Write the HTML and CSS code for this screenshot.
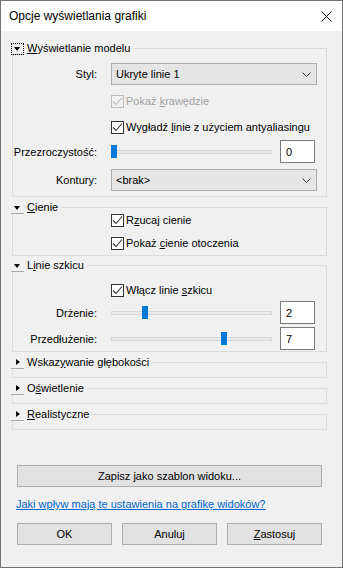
FILE: index.html
```html
<!DOCTYPE html>
<html lang="pl">
<head>
  <meta charset="UTF-8">
  <meta name="viewport" content="width=device-width, initial-scale=1.0">
  <title>Opcje wyświetlania grafiki</title>
  <link rel="stylesheet" href="styles.css">
</head>
<body>

  <div class="window">
    <div class="titlebar">
      <span class="title">Opcje wyświetlania grafiki</span>
      <svg class="close" width="11" height="11" viewBox="0 0 11 11">
        <path d="M0.5 0.5 L10.5 10.5 M10.5 0.5 L0.5 10.5" stroke="#000" stroke-width="1" fill="none"/>
      </svg>
    </div>

    <div class="content">
      <!-- Wyświetlanie modelu -->
      <fieldset class="group group-model">
        <legend><span class="toggle open focused"></span><u>W</u>yświetlanie modelu</legend>
        <div class="rows">
          <div class="row row-combo">
            <label class="lbl">Styl:</label>
            <div class="combo"><span>Ukryte linie 1</span><i class="chev"></i></div>
          </div>
          <div class="row row-check r-pokaz">
            <span class="lbl"></span>
            <span class="check disabled"></span>
            <span class="ctext muted">Pokaż <u>k</u>rawędzie</span>
          </div>
          <div class="row row-check r-wygladz">
            <span class="lbl"></span>
            <span class="check"></span>
            <span class="ctext">Wygładź <u>l</u>inie z użyciem antyaliasingu</span>
          </div>
          <div class="row row-slider r-przez">
            <label class="lbl">Przezroczystość:</label>
            <div class="slider"><div class="track"></div><span class="thumb" style="left: 0px"></span></div>
            <div class="numbox">0</div>
          </div>
          <div class="row row-combo r-kontury">
            <label class="lbl">Kontury:</label>
            <div class="combo"><span>&lt;brak&gt;</span><i class="chev"></i></div>
          </div>
        </div>
      </fieldset>

      <!-- Cienie -->
      <fieldset class="group group-shadow">
        <legend><span class="toggle open"></span><u>C</u>ienie</legend>
        <div class="rows">
          <div class="row row-check r-rzucaj">
            <span class="lbl"></span>
            <span class="check"></span>
            <span class="ctext">R<u>z</u>ucaj cienie</span>
          </div>
          <div class="row row-check r-otocz">
            <span class="lbl"></span>
            <span class="check"></span>
            <span class="ctext">Pokaż <u>c</u>ienie otoczenia</span>
          </div>
        </div>
      </fieldset>

      <!-- Linie szkicu -->
      <fieldset class="group group-sketch">
        <legend><span class="toggle open"></span>L<u>i</u>nie szkicu</legend>
        <div class="rows">
          <div class="row row-check r-wlacz">
            <span class="lbl"></span>
            <span class="check"></span>
            <span class="ctext">Włącz linie <u>s</u>zkicu</span>
          </div>
          <div class="row row-slider r-drzenie">
            <label class="lbl">Drżenie:</label>
            <div class="slider"><div class="track"></div><span class="thumb" style="left: 31px"></span></div>
            <div class="numbox">2</div>
          </div>
          <div class="row row-slider r-przed">
            <label class="lbl">Przedłużenie:</label>
            <div class="slider"><div class="track"></div><span class="thumb" style="left: 110px"></span></div>
            <div class="numbox">7</div>
          </div>
        </div>
      </fieldset>

      <fieldset class="group collapsed">
        <legend><span class="toggle"></span>Wskaz<u>y</u>wanie głębokości</legend>
      </fieldset>
      <fieldset class="group collapsed">
        <legend><span class="toggle"></span>O<u>ś</u>wietlenie</legend>
      </fieldset>
      <fieldset class="group collapsed">
        <legend><span class="toggle"></span><u>R</u>ealistyczne</legend>
      </fieldset>

      <button class="btn wide">Zapisz jako szablon widoku...</button>

      <a class="help" href="#">Jaki wpływ mają te ustawienia na grafikę widoków?</a>

      <div class="actions">
        <button class="btn">OK</button>
        <button class="btn">Anuluj</button>
        <button class="btn"><u>Z</u>astosuj</button>
      </div>
    </div>
  </div>

</body>
</html>
```

FILE: styles.css
```css
/* Page */
body {
  margin: 0;
  padding: 0;
  font-family: 'Liberation Sans', Arial, sans-serif;
  font-size: 11px;
  color: #000;
}
u {
  text-decoration: underline;
  text-underline-offset: 1px;
}

/* Window frame */
.window {
  width: 343px;
  height: 568px;
  box-sizing: border-box;
  border: 1px solid #737373;
  background: #f0f0f0;
  display: flex;
  flex-direction: column;
}
.titlebar {
  height: 30px;
  flex: none;
  background: #fff;
  display: flex;
  align-items: center;
  justify-content: space-between;
  padding: 0 10px 0 8px;
}
.title {
  font-size: 12px;
}
.close {
  display: block;
}

.content {
  display: flex;
  flex-direction: column;
}

/* Group boxes */
.group {
  margin: 4px 15px 0 11px;
  padding: 0;
  border: 1px solid #dcdcdc;
  min-width: 0;
}
.group-model {
  margin-top: 11px;
}
.group-sketch {
  margin-top: 3px;
}
legend {
  margin-left: -2px;
  padding: 0 3px 0 0;
  line-height: 13px;
  height: 13px;
  display: flex;
  align-items: center;
  white-space: nowrap;
}
.toggle {
  width: 13px;
  height: 12px;
  box-sizing: border-box;
  margin-right: 3px;
  background: #f0f0f0;
  border-bottom: 1px solid #a8a8a8;
  position: relative;
  flex: none;
}
.toggle::after {
  content: '';
  position: absolute;
  left: 5px;
  top: 2px;
  border-top: 3.5px solid transparent;
  border-bottom: 3.5px solid transparent;
  border-left: 4px solid #000;
}
.toggle.open::after {
  left: 3px;
  top: 4px;
  border-left: 3.5px solid transparent;
  border-right: 3.5px solid transparent;
  border-top: 4px solid #000;
  border-bottom: 0;
}
.toggle.focused {
  outline: 1px dotted #000;
  outline-offset: -1px;
}
.collapsed {
  padding-bottom: 8px;
}

/* Rows */
.rows {
  display: flex;
  flex-direction: column;
}
.row {
  display: flex;
  align-items: center;
}
.lbl {
  width: 84px;
  margin-right: 14px;
  text-align: right;
  flex: none;
}
.group-model .rows {
  padding: 8px 0 5px;
}
.row-combo {
  height: 22px;
}
.row-check {
  height: 14px;
}
.row-slider {
  height: 23px;
}
.r-pokaz { margin-top: 9px; }
.r-wygladz { margin-top: 12px; }
.r-przez { margin-top: 6px; }
.r-kontury { margin-top: 6px; }

.group-shadow .rows {
  padding: 0 0 5px;
  margin-top: -1px;
}
.r-otocz { margin-top: 9px; }

.group-sketch .rows {
  padding: 11px 0 1px;
}
.r-drzenie { margin-top: 4px; }
.r-przed { margin-top: 3px; }

/* Combo box */
.combo {
  width: 206px;
  height: 22px;
  box-sizing: border-box;
  background: #e5e5e5;
  border: 1px solid #acacac;
  display: flex;
  align-items: center;
  justify-content: space-between;
  padding: 0 5px 0 4px;
}
.chev {
  width: 9px;
  height: 5px;
  background: url("data:image/svg+xml,%3Csvg xmlns='http://www.w3.org/2000/svg' width='9' height='5'%3E%3Cpath d='M0.5 0.5 L4.5 4.5 L8.5 0.5' stroke='%23333' fill='none'/%3E%3C/svg%3E") no-repeat;
}

/* Checkbox */
.check {
  width: 13px;
  height: 13px;
  box-sizing: border-box;
  border: 1px solid #333;
  background: #fff url("data:image/svg+xml,%3Csvg xmlns='http://www.w3.org/2000/svg' width='11' height='11'%3E%3Cpath d='M1 5.5 L4 8.5 L10 1.5' stroke='%23333' stroke-width='1.1' fill='none'/%3E%3C/svg%3E") no-repeat center;
  flex: none;
}
.check.disabled {
  border-color: #bcbcbc;
  background: #f0f0f0 url("data:image/svg+xml,%3Csvg xmlns='http://www.w3.org/2000/svg' width='11' height='11'%3E%3Cpath d='M1 5.5 L4 8.5 L10 1.5' stroke='%23bcbcbc' stroke-width='1.1' fill='none'/%3E%3C/svg%3E") no-repeat center;
}
.ctext {
  margin-left: 2px;
  white-space: nowrap;
}
.muted {
  color: #a0a0a0;
}

/* Slider */
.slider {
  position: relative;
  width: 161px;
  height: 13px;
  display: flex;
  align-items: center;
  flex: none;
}
.track {
  width: 100%;
  height: 4px;
  box-sizing: border-box;
  background: #e7eaea;
  border: 1px solid #d6d6d6;
}
.thumb {
  position: absolute;
  top: 0;
  width: 6px;
  height: 13px;
  background: #0078d7;
}
.numbox {
  width: 35px;
  height: 23px;
  box-sizing: border-box;
  margin-left: 8px;
  background: #fff;
  border: 1px solid #7a7a7a;
  padding-left: 5px;
  display: flex;
  align-items: center;
}

/* Buttons and link */
.btn {
  font-family: inherit;
  font-size: 11px;
  width: 95px;
  height: 22px;
  background: #e1e1e1;
  border: 1px solid #adadad;
  padding: 0;
  color: #000;
}
.btn.wide {
  width: 305px;
  margin: 35px 0 0 16px;
}
.help {
  margin: 10px 0 0 15px;
  line-height: 15px;
  color: #0066cc;
  text-decoration: underline;
  align-self: flex-start;
}
.actions {
  display: flex;
  gap: 10px;
  margin: 11px 0 0 16px;
}
```
